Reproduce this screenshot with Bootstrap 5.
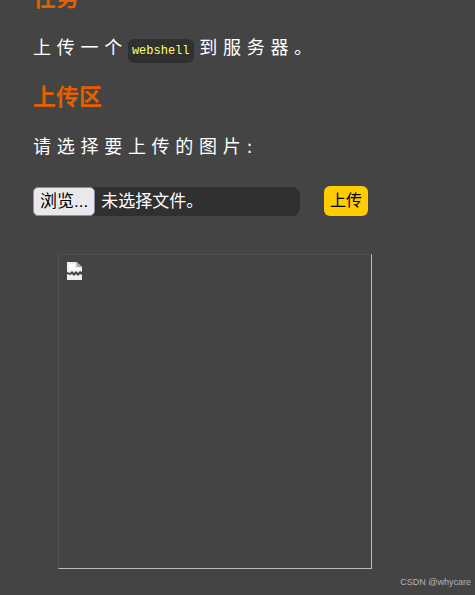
<!DOCTYPE html>
<html lang="zh-CN">
<head>
<meta charset="utf-8">
<meta name="viewport" content="width=device-width, initial-scale=1">
<title>上传区</title>
<link href="https://cdn.jsdelivr.net/npm/bootstrap@5.3.0/dist/css/bootstrap.min.css" rel="stylesheet">
<style>
body { background: #444; color: #fff; font-family: "Liberation Sans", "Noto Sans CJK SC", sans-serif; overflow: hidden; }
.panel { padding: 0 33px; margin-top: -16px; }
.panel h3 { color: #e35f00; font-size: 23px; line-height: 28px; font-weight: 700; margin: 0 0 21px; }
.spaced { font-family: "DejaVu Sans", "Noto Sans CJK SC", sans-serif; font-size: 18px; line-height: 30px; margin: 0 0 20px; }
.spaced code { background: #303030; color: #ff6; border-radius: 6px; padding: 5px 4px; font: 12px/16px "Liberation Mono", monospace; }
.upload-row { gap: 24px; margin: 24px 0 38px; }
.picker { background: #303030; width: 267px; height: 29px; border-radius: 8px; font-size: 17px; gap: 6px; cursor: pointer; }
.browse { background: #e9e9ed; color: #000; border: 1px solid #8f8f9d; border-radius: 5px; padding: 0 6px; line-height: 28px; }
.file-name { line-height: 30px; }
.send { background: #fc0; color: #000; border: 0; border-radius: 6px; font-size: 16px; line-height: 30px; padding: 0 6px; }
.preview { width: 314px; height: 315px; margin-left: 25px; padding: 7px; border: 1px solid; border-color: #505050 #bbb #bbb #505050; }
.credit { color: #b4b4b4; font-size: 9px; line-height: 14px; padding: 6px 4px 0; }
</style>
</head>
<body>
<main class="panel">
  <h3>任务</h3>
  <p class="spaced">上 传 一 个 <code>webshell</code> 到 服 务 器 。</p>
  <h3>上传区</h3>
  <form>
    <p class="spaced">请 选 择 要 上 传 的 图 片 :</p>
    <div class="upload-row d-flex align-items-end">
      <label class="picker d-flex align-items-stretch position-relative" for="upload-file">
        <input class="visually-hidden" type="file" id="upload-file">
        <span class="browse">浏览...</span>
        <span class="file-name">未选择文件。</span>
      </label>
      <button class="send" type="button">上传</button>
    </div>
  </form>
  <div class="preview">
    <svg class="d-block" width="17" height="18" viewBox="0 0 17 18" role="img" aria-label="图片">
      <path d="M1 0h9.500L16 5v5l-2-1-2 2-2-2-2 2-2-2-2 2-3-1z" fill="#eee"/>
      <path d="M3 2h6v4h5v2H3z" fill="#fff"/>
      <path d="M10.500 0L16 5h-5.500z" fill="#aaa"/>
      <path d="M1 12l3 1 2-1 2 2 2-2 2 2 2-2 2 1v5H1z" fill="#eee"/>
    </svg>
  </div>
</main>
<footer class="credit text-end">CSDN @whycare</footer>
<script src="https://cdn.jsdelivr.net/npm/bootstrap@5.3.0/dist/js/bootstrap.bundle.min.js"></script>
</body>
</html>
